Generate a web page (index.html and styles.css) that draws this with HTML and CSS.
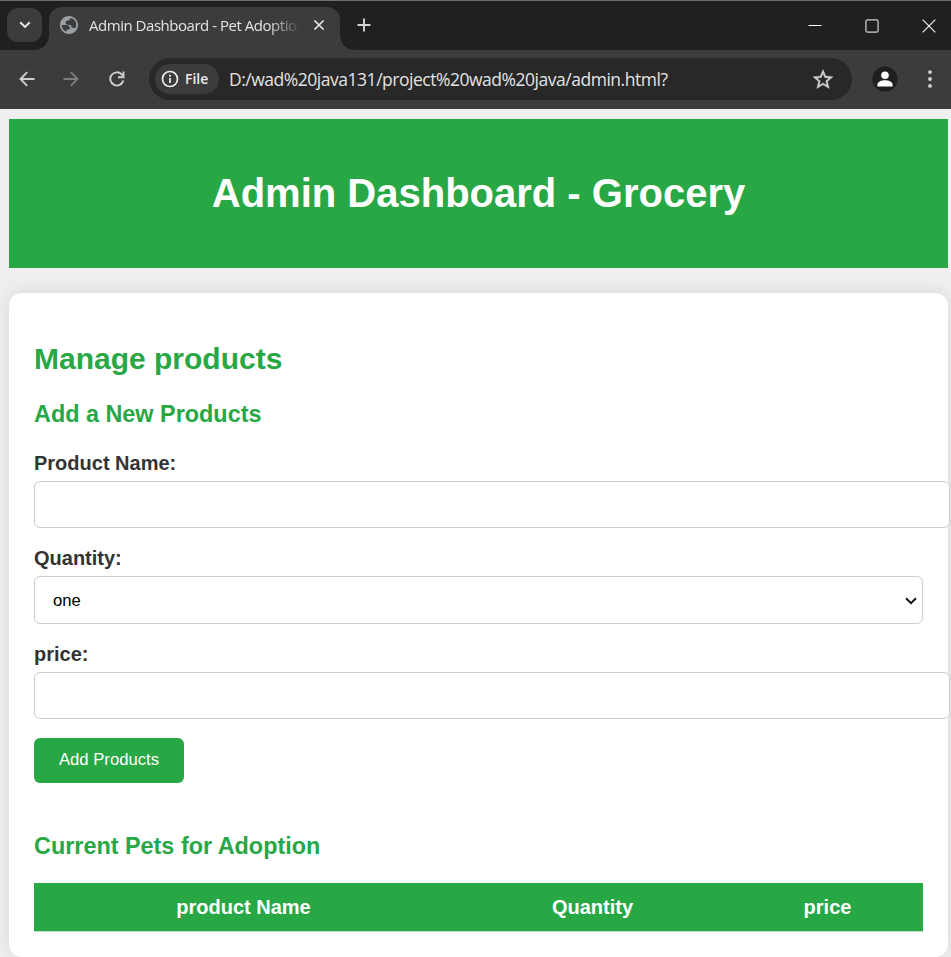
FILE: index.html
```html
<!DOCTYPE html>
<html lang="en">
<head>
<meta charset="utf-8">
<title>Admin Dashboard - Pet Adoption</title>
<link rel="stylesheet" href="styles.css">
</head>
<body>
<div class="browser">
  <div class="tabstrip">
    <div class="tab-search"><svg width="12" height="8" viewBox="0 0 12 8"><path d="M1.2 1.2 6 5.9l4.8-4.7" fill="none" stroke="#e8e8e8" stroke-width="2"/></svg></div>
    <div class="tab">
      <svg class="globe" width="18" height="18" viewBox="2 2 20 20"><path fill="#9aa0a6" d="M12 2C6.48 2 2 6.48 2 12s4.480 10 10 10 10-4.480 10-10S17.520 2 12 2zM4 12h4.400c3.407.020 4.922 1.730 4.543 5.127H9.488v2.470A8.004 8.004 0 0 1 4 12zm16 0c0 .97-.17 1.900-.49 2.760-.47.430-1.140.640-2.010.640-2.100 0-3.200-1.130-3.300-3.380h-2.800c-2.100-.2-3.100-1.300-3.100-3.200 0-1.200.9-1.900 2.700-1.900h1.200c.1-1.700 1.100-2.500 3.200-2.300A8 8 0 0 1 20 12z"/></svg>
      <span class="tab-title">Admin Dashboard - Pet Adoption</span>
      <svg class="tab-close" width="12" height="12" viewBox="0 0 12 12"><path d="M1.500 1.500 10.500 10.500M10.500 1.500 1.500 10.500" stroke="#e8e8e8" stroke-width="1.700"/></svg>
    </div>
    <svg class="new-tab" width="14" height="14" viewBox="0 0 14 14"><path d="M7 .5v13M.5 7h13" stroke="#d5d5d5" stroke-width="1.900"/></svg>
    <div class="window-controls">
      <svg width="14" height="14" viewBox="0 0 14 14"><path d="M.5 6.500h13" stroke="#fff"/></svg>
      <svg width="14" height="14" viewBox="0 0 14 14"><rect x=".9" y=".9" width="12.200" height="12.200" rx="1.600" fill="none" stroke="#d5d5d5" stroke-width="1.200"/></svg>
      <svg width="14" height="14" viewBox="0 0 14 14"><path d="M.7.7 13.300 13.300M13.300.7.7 13.300" stroke="#eee" stroke-width="1.200"/></svg>
    </div>
  </div>
  <div class="toolbar">
    <svg class="nav" width="16" height="16" viewBox="0 0 16 16"><path d="M15.500 8H1.800M8.200 1.200 1.500 8l6.700 6.800" fill="none" stroke="#cfcfcf" stroke-width="1.900"/></svg>
    <svg class="nav forward" width="16" height="16" viewBox="0 0 16 16"><path d="M.5 8h13.700M7.800 1.200 14.500 8l-6.700 6.800" fill="none" stroke="#7d7d7d" stroke-width="1.900"/></svg>
    <svg class="nav reload" width="16" height="16" viewBox="0 0 16 16"><path d="M14.300 9.500A6.600 6.600 0 1 1 12.700 3.400L14.300 5.300" fill="none" stroke="#cfcfcf" stroke-width="1.900"/><path d="M14.500.5v5.800H9" fill="none" stroke="#cfcfcf" stroke-width="1.900"/></svg>
    <div class="address">
      <div class="chip">
        <svg width="18" height="18" viewBox="0 0 18 18"><circle cx="9" cy="9" r="7.500" fill="none" stroke="#ececec" stroke-width="1.700"/><path d="M9 8v5M9 4.800v1.900" stroke="#ececec" stroke-width="1.800"/></svg>
        <span>File</span>
      </div>
      <span class="url">D:/wad%20java131/project%20wad%20java/admin.html?</span>
      <svg class="star" width="20" height="20" viewBox="2 1.500 20 20"><path fill="#cfcfcf" stroke="#cfcfcf" stroke-width=".4" d="m22 9.240-7.190-.62L12 2 9.190 8.630 2 9.240l5.460 4.730L5.820 21 12 17.270 18.180 21l-1.630-7.030L22 9.240zM12 15.400l-3.760 2.270 1-4.280-3.320-2.880 4.380-.38L12 6.100l1.710 4.040 4.380.38-3.320 2.880 1 4.280L12 15.400z"/></svg>
    </div>
    <svg class="profile" width="26" height="26" viewBox="0 0 26 26"><circle cx="13" cy="13" r="12.600" fill="#1f1f1f"/><circle cx="13" cy="9.200" r="3.800" fill="#fff"/><path d="M5.400 20.500v-1.800c0-3 4.400-4.400 7.600-4.400s7.600 1.400 7.600 4.400v1.800z" fill="#fff"/></svg>
    <svg class="menu" width="4" height="18" viewBox="0 0 4 18"><g fill="#cfcfcf"><circle cx="2" cy="2.100" r="1.950"/><circle cx="2" cy="9" r="1.950"/><circle cx="2" cy="15.900" r="1.950"/></g></svg>
  </div>
</div>
<div class="page">
  <header><h1>Admin Dashboard - Grocery</h1></header>
  <main>
    <h2>Manage products</h2>
    <h3>Add a New Products</h3>
    <form>
      <label for="name">Product Name:</label>
      <input id="name" type="text">
      <label for="quantity">Quantity:</label>
      <div class="select-wrap">
        <select id="quantity"><option>one</option></select>
        <svg width="12" height="8" viewBox="0 0 12 8"><path d="M1 1.300 6 6.200l5-4.900" fill="none" stroke="#111" stroke-width="2"/></svg>
      </div>
      <label for="price">price:</label>
      <input id="price" type="text">
      <button type="button">Add Products</button>
    </form>
    <h3 class="list-title">Current Pets for Adoption</h3>
    <table>
      <thead><tr><th class="col-name">product Name</th><th class="col-quantity">Quantity</th><th>price</th></tr></thead>
    </table>
  </main>
</div>
</body>
</html>
```
FILE: styles.css
```css
* { box-sizing: border-box; }
html, body { margin: 0; height: 957px; overflow: hidden; }
body { background: #efefef; font: 20px/1.2 "Liberation Sans", Arial, sans-serif; color: #333; }
svg { display: block; flex: none; }

.browser { height: 109px; background: #3c3c3c; font-family: "Open Sans", sans-serif; }
.tabstrip { height: 50px; display: flex; align-items: flex-start; background: #202020; border-top: 1px solid #6b706d; padding-left: 7px; }
.tab-search { width: 35px; height: 34px; margin-top: 7px; border-radius: 11px; background: #3c3c3c; display: flex; align-items: center; justify-content: center; }
.tab { position: relative; width: 291px; height: 43px; margin: 6px 0 0 7px; padding: 0 15px 7px 11px; display: flex; align-items: center; background: #3c3c3c; border-radius: 13px 13px 0 0; }
.tab::before, .tab::after { content: ""; position: absolute; bottom: 0; width: 14px; height: 14px; }
.tab::before { right: 100%; background: radial-gradient(circle at 0 0, transparent 13.500px, #3c3c3c 14px); }
.tab::after { left: 100%; background: radial-gradient(circle at 100% 0, transparent 13.500px, #3c3c3c 14px); }
.tab-title { width: 209px; margin-left: 11px; overflow: hidden; white-space: nowrap; font-size: 15px; line-height: 24px; letter-spacing: -.47px; color: #e3e3e3; -webkit-mask-image: linear-gradient(90deg, #000 180px, transparent 212px); mask-image: linear-gradient(90deg, #000 180px, transparent 212px); }
.tab-close { margin-left: auto; }
.new-tab { margin: 17px 0 0 17px; }
.window-controls { display: flex; gap: 43px; margin: 18px 15px 0 auto; }

.toolbar { height: 59px; display: flex; align-items: center; padding: 0 0 1px 19px; }
.forward { margin-left: 28px; }
.reload { margin-left: 30px; }
.address { width: 703px; height: 42px; margin-left: 24px; padding: 0 19px 0 6px; display: flex; align-items: center; border-radius: 21px; background: #282828; }
.chip { width: 64px; height: 30px; padding-left: 6px; display: flex; align-items: center; gap: 6px; border-radius: 15px; background: #3c3c3c; color: #ececec; font-size: 14px; font-weight: 600; }
.url { margin-left: 10px; font-size: 17.500px; line-height: 24px; letter-spacing: -.48px; white-space: nowrap; color: #e3e3e3; }
.star { margin-left: auto; }
.profile { margin-left: 20px; }
.menu { margin-left: 30px; }

.page { padding: 10px 3px 0 9px; }
header { height: 149px; display: flex; align-items: center; justify-content: center; padding-bottom: 2px; background: #28a745; color: #fff; }
h1, h2, h3 { margin: 0; font-weight: bold; }
h1 { font-size: 40px; line-height: 46px; }
main { height: 664px; margin-top: 25px; padding: 48px 25px 0; border-radius: 12.500px; background: #fff; box-shadow: 0 0 19px rgba(0, 0, 0, .1); }
h2, h3 { color: #28a745; }
h2 { font-size: 30px; line-height: 36px; }
h3 { font-size: 23.400px; line-height: 28px; margin-top: 23px; }
form { margin-top: 23px; }
label { display: block; height: 24px; line-height: 24px; margin-bottom: 6px; font-weight: bold; }
input, select { display: block; border: 1px solid #ccc; border-radius: 6px; background: #fff; font: 16.670px "Liberation Sans", Arial, sans-serif; }
input { width: calc(100% + 27px); height: 47px; margin-bottom: 18px; padding: 12px; }
.select-wrap { position: relative; margin-bottom: 18px; }
select { width: 100%; height: 48px; padding: 0 18px; appearance: none; color: #000; }
.select-wrap svg { position: absolute; right: 6px; top: 21px; pointer-events: none; }
button { display: block; width: 150px; height: 45px; margin-top: 19px; padding: 0 0 2px; border: 0; border-radius: 6px; background: #28a745; color: #fff; font: 16.670px "Liberation Sans", Arial, sans-serif; }
.list-title { margin-top: 49px; }
table { width: 100%; margin-top: 23px; border-collapse: separate; border-spacing: 0; }
th { height: 49px; padding: 0; background: #28a745; border-bottom: 1px solid #b9dfc2; color: #fff; line-height: 24px; }
.col-name { width: 419px; }
.col-quantity { width: 279px; }
```
